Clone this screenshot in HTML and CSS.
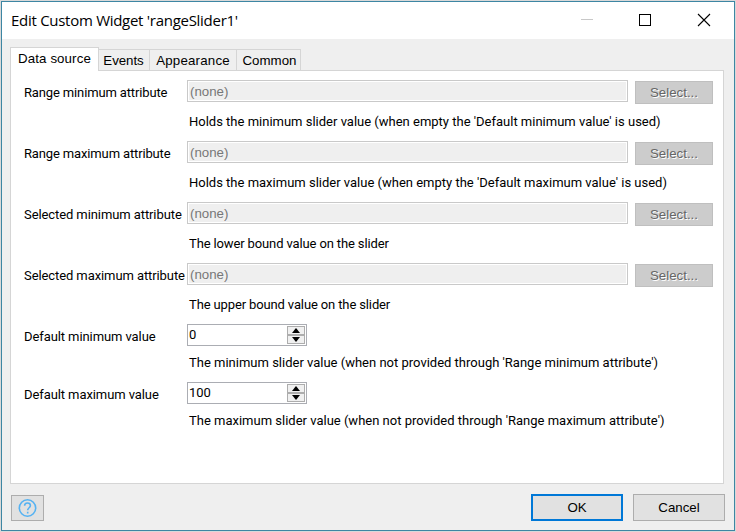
FILE: index.html
```html
<!DOCTYPE html>
<html lang="en">
<head>
<meta charset="utf-8">
<title>Edit Custom Widget</title>
<link rel="stylesheet" href="styles.css">
</head>
<body>
<div class="window">
  <header class="titlebar">
    <h1 class="title">Edit Custom Widget 'rangeSlider1'</h1>
    <svg class="controls" width="130" height="14" viewBox="0 0 130 14" fill="none" shape-rendering="crispEdges">
      <path d="M0 6.5H12" stroke="#c8c8c8"/>
      <rect x="58.5" y="1.5" width="11" height="11" stroke="#000"/>
      <path d="M117 1L129 13M129 1L117 13" stroke="#000" stroke-width="1.1" shape-rendering="auto"/>
    </svg>
  </header>
  <nav class="tabs">
    <div class="tab active">Data source</div>
    <div class="tab events">Events</div>
    <div class="tab appearance">Appearance</div>
    <div class="tab common">Common</div>
  </nav>
  <main class="panel">
    <section class="row">
      <label class="label">Range minimum attribute</label>
      <div class="field">(none)</div><button class="select">Select...</button>
      <p class="hint">Holds the minimum slider value (when empty the 'Default minimum value' is used)</p>
    </section>
    <section class="row">
      <label class="label">Range maximum attribute</label>
      <div class="field">(none)</div><button class="select">Select...</button>
      <p class="hint">Holds the maximum slider value (when empty the 'Default maximum value' is used)</p>
    </section>
    <section class="row">
      <label class="label wide">Selected minimum attribute</label>
      <div class="field">(none)</div><button class="select">Select...</button>
      <p class="hint brief">The lower bound value on the slider</p>
    </section>
    <section class="row">
      <label class="label wide">Selected maximum attribute</label>
      <div class="field">(none)</div><button class="select">Select...</button>
      <p class="hint brief">The upper bound value on the slider</p>
    </section>
    <section class="row short">
      <label class="label wide">Default minimum value</label>
      <div class="number"><span>0</span><div class="spin"><i class="step up"></i><i class="step down"></i></div></div>
      <p class="hint">The minimum slider value (when not provided through 'Range minimum attribute')</p>
    </section>
    <section class="row short">
      <label class="label wide">Default maximum value</label>
      <div class="number"><span>100</span><div class="spin"><i class="step up"></i><i class="step down"></i></div></div>
      <p class="hint">The maximum slider value (when not provided through 'Range maximum attribute')</p>
    </section>
  </main>
  <footer class="footer">
    <button class="help" aria-label="Help">
      <svg width="19" height="20" viewBox="0.5 0 19 20" fill="none" stroke="#55b2f2" stroke-width="1.6">
        <circle cx="10" cy="10" r="8.2"/>
        <path d="M7.1 7.8C7.1 5.9 8.3 5 10 5s2.9 1 2.9 2.6c0 2.1-2.7 2.3-2.7 4.7M10.2 13.7v1.8"/>
      </svg>
    </button>
    <button class="action ok">OK</button>
    <button class="action">Cancel</button>
  </footer>
</div>
</body>
</html>
```
FILE: styles.css
```css
* { box-sizing: border-box; }
body {
  margin: 0;
  width: 736px;
  height: 532px;
  padding: 1px;
  overflow: hidden;
  background: #d9d9d9;
  color: #000;
  font: 13px/16px Roboto, sans-serif;
}
.window {
  width: 734px;
  height: 530px;
  border: 1px solid #3d86a3;
  background: #efefef;
  display: flex;
  flex-direction: column;
}
.titlebar {
  height: 37px;
  flex: none;
  background: #fff;
  display: flex;
  justify-content: space-between;
  align-items: flex-start;
  padding: 0 23px 0 9px;
}
.title {
  margin: 8px 0 0;
  font: 400 15px/20px "Open Sans", sans-serif;
  letter-spacing: -0.28px;
}
.controls { margin-top: 11px; }
.tabs {
  height: 31px;
  flex: none;
  margin: 1px 0 0 8px;
  display: flex;
  align-items: flex-end;
  font: 13.3px/16px "Liberation Sans", sans-serif;
  white-space: nowrap;
}
.tab {
  height: 22px;
  border: 1px solid #d5d5d5;
  border-width: 1px 1px 0 0;
  padding-top: 3px;
  text-align: center;
}
.tab.active {
  width: 89px;
  height: 24px;
  background: #fff;
  border-left-width: 1px;
  position: relative;
  letter-spacing: 0.1px;
}
.events { width: 51px; letter-spacing: -0.05px; padding-right: 1px; }
.appearance { width: 87px; letter-spacing: 0.2px; }
.common { width: 64px; padding-left: 2px; }
.panel {
  width: 714px;
  height: 414px;
  flex: none;
  margin: -1px 0 0 8px;
  border: 1px solid #d5d5d5;
  background: #fff;
  padding: 9px 0 0 13px;
}
.row {
  height: 61px;
  display: grid;
  grid-template-columns: 163px 441px 78px;
  grid-template-rows: 34px 16px;
  align-items: start;
  white-space: nowrap;
}
.row.short { height: 58px; grid-template-rows: 31px 16px; }
.label { padding-top: 5px; letter-spacing: -0.14px; }
.label.wide { letter-spacing: -0.09px; }
.hint { grid-column: 2 / 4; margin: 0 0 0 2px; }
.hint.brief { letter-spacing: -0.13px; }
.field {
  height: 22px;
  border: 1px solid #c9c9c9;
  box-shadow: inset 0 0 0 1px #fff;
  background: #efefef;
  color: #777;
  padding: 2px;
  font: 13.3px/17px "Liberation Sans", sans-serif;
}
button {
  font: 13.3px/16px "Liberation Sans", sans-serif;
  padding: 0;
  border: 1px solid #adadad;
  background: #e1e1e1;
  color: #000;
}
.select {
  width: 78px;
  height: 23px;
  margin: 1px 0 0 7px;
  border-color: #bfbfbf;
  background: #ccc;
  color: #666;
  text-shadow: 1px 1px 0 #fff;
}
.number {
  width: 120px;
  height: 22px;
  border: 1px solid #abadb3;
  display: flex;
  justify-content: space-between;
  padding: 1px;
}
.number span { padding-top: 1px; }
.spin { width: 18px; height: 18px; }
.step {
  height: 9px;
  border: 1px solid #adadad;
  background: #f0f0f0;
  display: flex;
  align-items: center;
  justify-content: center;
}
.step::before {
  content: "";
  width: 8px;
  height: 5px;
  background: #000;
  clip-path: polygon(50% 0, 100% 100%, 0 100%);
}
.down::before { clip-path: polygon(0 0, 100% 0, 50% 100%); }
.footer {
  margin: 10px 9px 0 9px;
  height: 27px;
  display: flex;
  gap: 10px;
}
.help {
  width: 33px;
  height: 26px;
  margin: 1px auto 0 0;
  display: flex;
  align-items: center;
  justify-content: center;
}
.action { width: 92px; height: 27px; }
.ok { border: 2px solid #0078d7; }
```
